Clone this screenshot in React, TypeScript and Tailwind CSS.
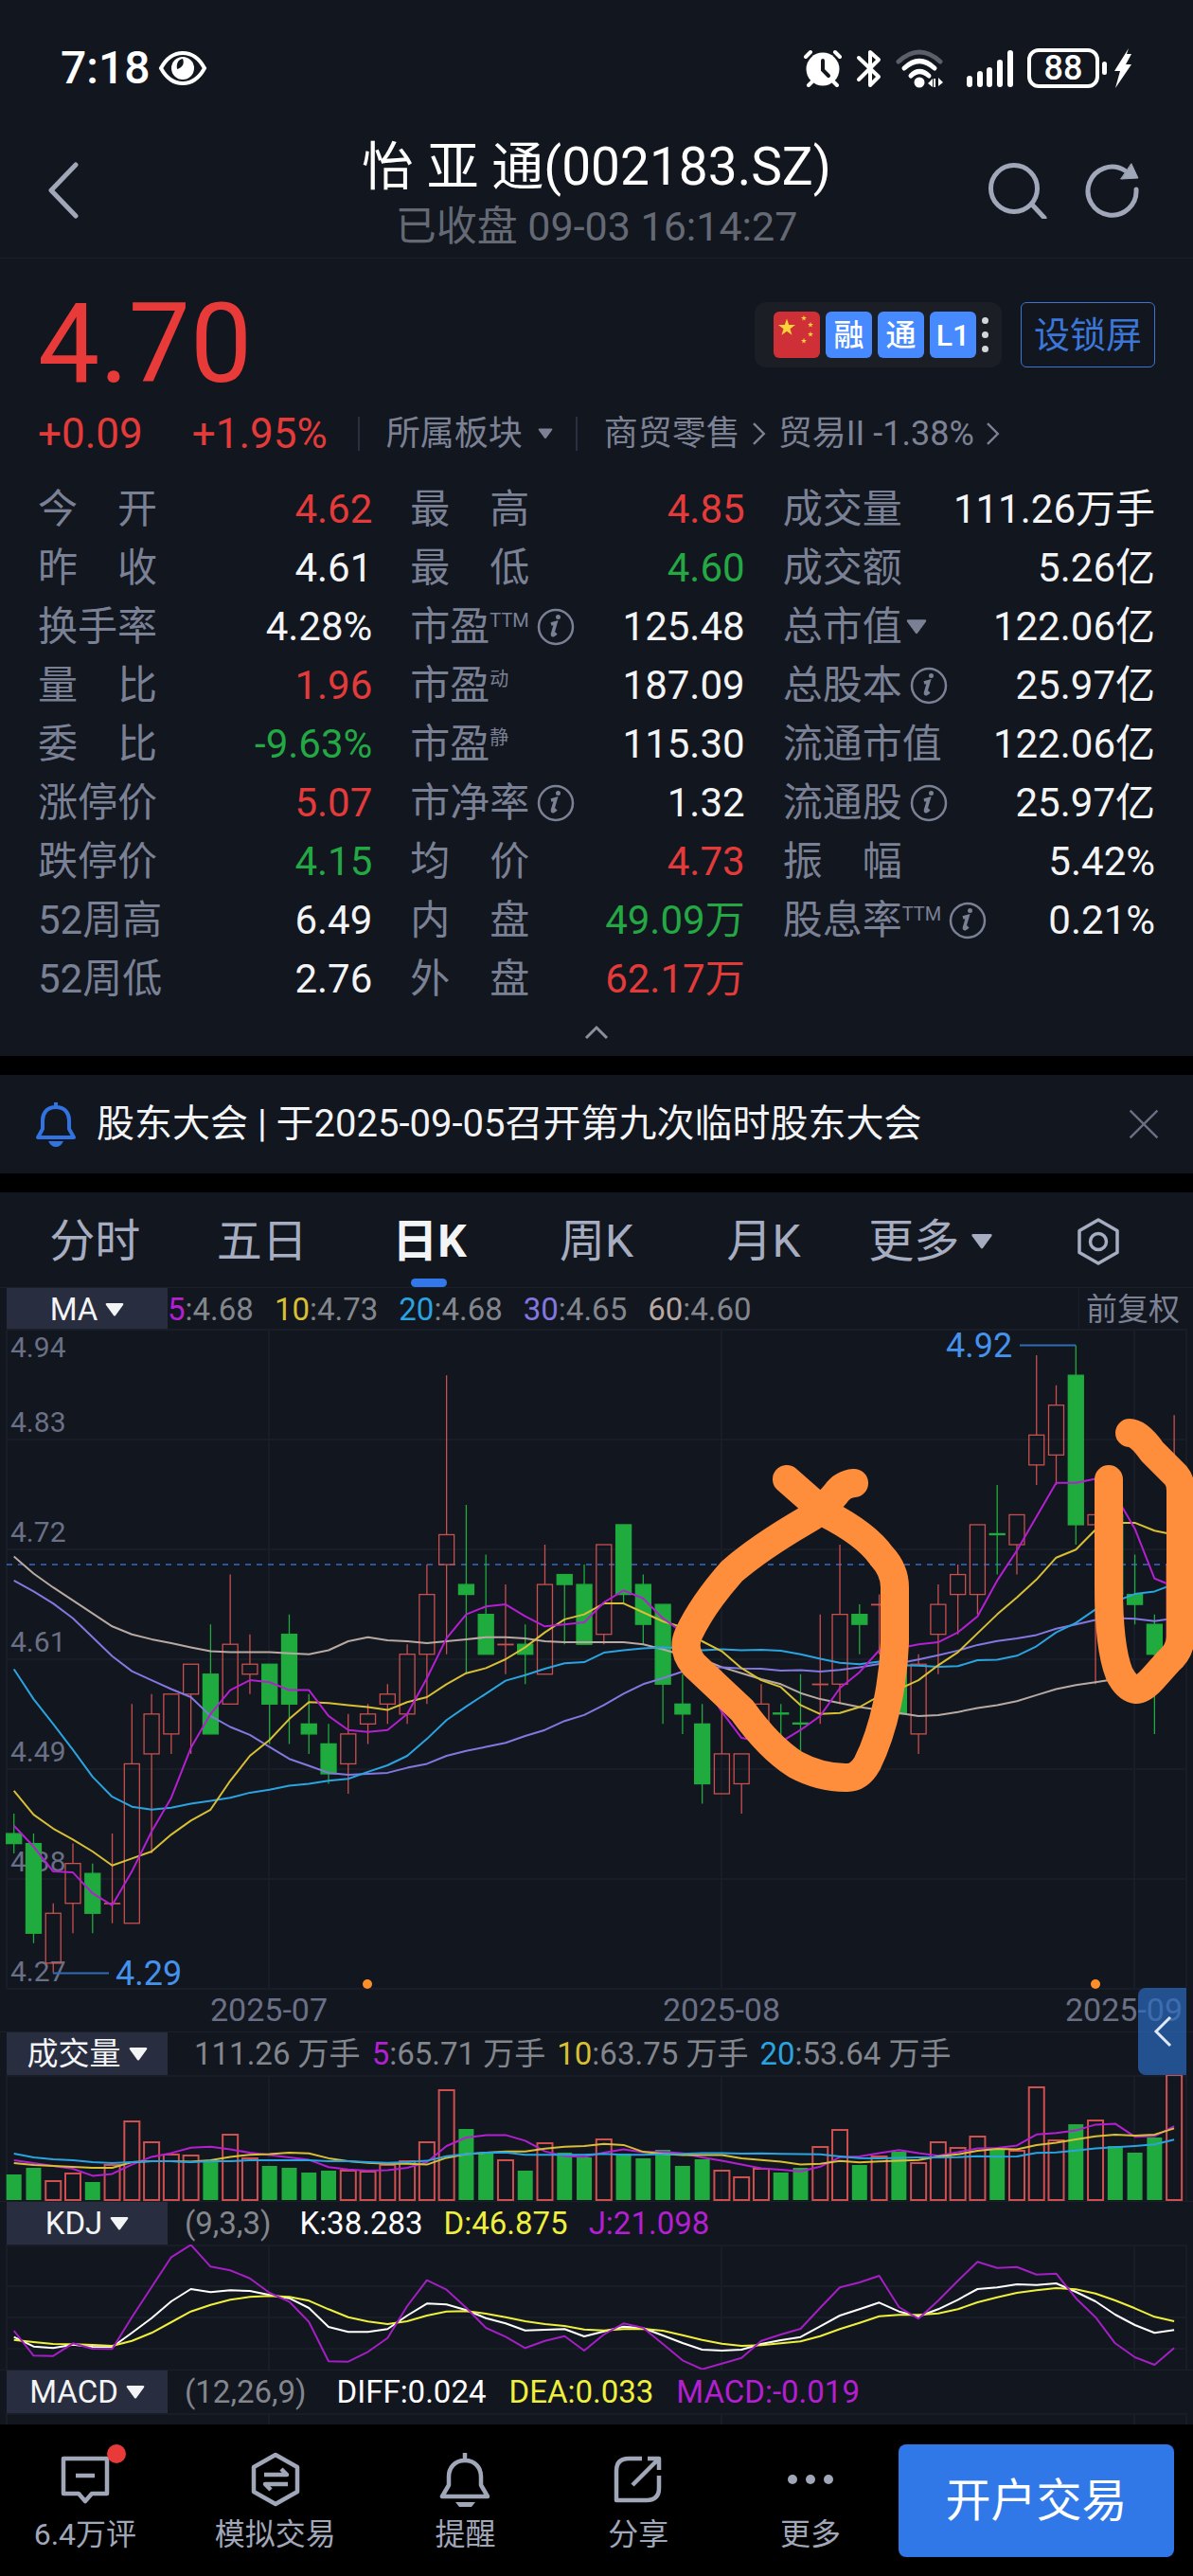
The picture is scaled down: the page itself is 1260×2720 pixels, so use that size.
import { useState } from "react";
import type { ReactNode } from "react";
import clsx from "clsx";

type Tone = "up" | "down" | "flat";

interface Stat {
  label: string;
  sup?: string;
  info?: boolean;
  caret?: boolean;
  value: string;
  tone?: Tone;
}

// open, close, high, low
type Candle = [number, number, number, number];

const STEP = 20.77;
const FIRST_X = 14.7;
const GRID = "#191d27";
const RED = "#c9504f";
const GREEN = "#1fab3d";
const PURPLE = "#b31fd1";
const YELLOW = "#d8bf35";
const CYAN = "#2aa4e0";
const VIOLET = "#8377e0";
const SAND = "#b8a9a2";
const MONTH_X = [284, 762, 1198];

const TONES: Record<Tone, string> = {
  up: "text-[#e33b3a]",
  down: "text-[#24a844]",
  flat: "text-[#f3f4f6]",
};

const stats: Stat[][] = [
  [
    { label: "今\u3000开", value: "4.62", tone: "up" },
    { label: "昨\u3000收", value: "4.61" },
    { label: "换手率", value: "4.28%" },
    { label: "量\u3000比", value: "1.96", tone: "up" },
    { label: "委\u3000比", value: "-9.63%", tone: "down" },
    { label: "涨停价", value: "5.07", tone: "up" },
    { label: "跌停价", value: "4.15", tone: "down" },
    { label: "52周高", value: "6.49" },
    { label: "52周低", value: "2.76" },
  ],
  [
    { label: "最\u3000高", value: "4.85", tone: "up" },
    { label: "最\u3000低", value: "4.60", tone: "down" },
    { label: "市盈", sup: "TTM", info: true, value: "125.48" },
    { label: "市盈", sup: "动", value: "187.09" },
    { label: "市盈", sup: "静", value: "115.30" },
    { label: "市净率", info: true, value: "1.32" },
    { label: "均\u3000价", value: "4.73", tone: "up" },
    { label: "内\u3000盘", value: "49.09万", tone: "down" },
    { label: "外\u3000盘", value: "62.17万", tone: "up" },
  ],
  [
    { label: "成交量", value: "111.26万手" },
    { label: "成交额", value: "5.26亿" },
    { label: "总市值", caret: true, value: "122.06亿" },
    { label: "总股本", info: true, value: "25.97亿" },
    { label: "流通市值", value: "122.06亿" },
    { label: "流通股", info: true, value: "25.97亿" },
    { label: "振\u3000幅", value: "5.42%" },
    { label: "股息率", sup: "TTM", info: true, value: "0.21%" },
  ],
];

const candles: Candle[] = [
  [4.43, 4.42, 4.45, 4.41], [4.42, 4.33, 4.43, 4.32], [4.3, 4.35, 4.36, 4.29], [4.36, 4.4, 4.42, 4.33],
  [4.39, 4.35, 4.4, 4.33], [4.36, 4.36, 4.43, 4.34], [4.34, 4.5, 4.56, 4.34], [4.51, 4.55, 4.57, 4.41],
  [4.53, 4.57, 4.57, 4.51], [4.57, 4.6, 4.6, 4.51], [4.59, 4.53, 4.64, 4.53], [4.56, 4.62, 4.69, 4.56],
  [4.59, 4.6, 4.63, 4.57], [4.6, 4.56, 4.6, 4.52], [4.63, 4.56, 4.65, 4.52], [4.54, 4.53, 4.57, 4.51],
  [4.52, 4.49, 4.54, 4.48], [4.5, 4.53, 4.55, 4.47], [4.54, 4.55, 4.56, 4.52], [4.56, 4.57, 4.58, 4.54],
  [4.55, 4.61, 4.62, 4.54], [4.61, 4.67, 4.7, 4.56], [4.7, 4.73, 4.89, 4.61], [4.68, 4.67, 4.76, 4.59],
  [4.65, 4.61, 4.71, 4.61], [4.62, 4.62, 4.68, 4.59], [4.62, 4.61, 4.64, 4.58], [4.59, 4.68, 4.72, 4.59],
  [4.69, 4.68, 4.69, 4.62], [4.68, 4.62, 4.7, 4.62], [4.63, 4.72, 4.72, 4.62], [4.74, 4.67, 4.74, 4.66],
  [4.68, 4.64, 4.69, 4.62], [4.66, 4.58, 4.66, 4.54], [4.56, 4.55, 4.59, 4.53], [4.54, 4.48, 4.56, 4.46],
  [4.47, 4.51, 4.56, 4.47], [4.48, 4.51, 4.51, 4.45], [4.54, 4.56, 4.58, 4.51], [4.551, 4.55, 4.56, 4.52],
  [4.541, 4.54, 4.59, 4.51], [4.58, 4.58, 4.65, 4.54], [4.58, 4.65, 4.72, 4.56], [4.65, 4.64, 4.66, 4.61],
  [4.66, 4.66, 4.67, 4.61], [4.64, 4.55, 4.66, 4.55], [4.53, 4.6, 4.61, 4.51], [4.63, 4.66, 4.68, 4.59],
  [4.67, 4.69, 4.7, 4.63], [4.67, 4.74, 4.74, 4.65], [4.731, 4.73, 4.78, 4.69], [4.72, 4.75, 4.75, 4.69],
  [4.8, 4.83, 4.91, 4.78], [4.81, 4.86, 4.88, 4.78], [4.89, 4.74, 4.92, 4.72], [4.74, 4.75, 4.78, 4.58],
  [4.75, 4.67, 4.76, 4.66], [4.67, 4.66, 4.71, 4.64], [4.64, 4.61, 4.65, 4.53], [4.62, 4.7, 4.85, 4.6],
];

const volumes = [
  27, 34, 20, 28, 19, 37, 83, 61, 48, 47, 42, 69, 44, 36, 34, 29, 31, 31, 30, 37,
  41, 61, 116, 75, 49, 42, 31, 60, 50, 45, 64, 49, 44, 53, 36, 43, 31, 24, 33, 29,
  34, 56, 74, 37, 46, 51, 39, 61, 55, 67, 53, 52, 119, 63, 80, 84, 57, 50, 66, 132,
];

// averages of the days whose window starts before the first candle
const priceSeed = {
  5: [4.438, 4.417, 4.392, 4.391],
  10: [4.473, 4.449, 4.435, 4.424, 4.412, 4.398, 4.405, 4.412, 4.429],
  20: [
    4.595, 4.565, 4.54, 4.514, 4.487, 4.467, 4.457, 4.454, 4.456, 4.46,
    4.463, 4.466, 4.471, 4.474, 4.478, 4.48, 4.483, 4.485, 4.492,
  ],
  30: [
    4.684, 4.673, 4.661, 4.646, 4.627, 4.608, 4.593, 4.584, 4.575, 4.567,
    4.548, 4.537, 4.529, 4.517, 4.505, 4.498, 4.491, 4.489, 4.49, 4.491,
    4.496, 4.5, 4.508, 4.513, 4.517, 4.521, 4.528, 4.534, 4.543,
  ],
};

const ma60 = [
  4.708, 4.691, 4.677, 4.664, 4.651, 4.638, 4.63, 4.625, 4.621, 4.617,
  4.613, 4.612, 4.612, 4.612, 4.611, 4.61, 4.614, 4.623, 4.627, 4.624,
  4.623, 4.621, 4.623, 4.625, 4.627, 4.627, 4.626, 4.623, 4.622, 4.622,
  4.622, 4.622, 4.62, 4.615, 4.609, 4.605, 4.597, 4.591, 4.585, 4.58,
  4.571, 4.565, 4.561, 4.557, 4.554, 4.551, 4.548, 4.549, 4.552, 4.556,
  4.559, 4.563, 4.569, 4.575, 4.579, 4.582, 4.585, 4.587, 4.592, 4.6,
];

const volumeSeed = {
  5: [42, 39, 36, 33],
  10: [39, 37, 36, 35, 34, 34, 40, 41, 41],
  20: [49, 45, 43, 42, 40, 39, 40, 41, 41, 40, 41, 41, 42, 42, 42, 42, 41, 41, 40],
};

const kdj = {
  k: [
    1133, 1163, 1168, 1157, 1164, 1165, 1120, 1073, 1020, 981, 991, 985, 987, 1000, 1010,
    1041, 1101, 1117, 1117, 1108, 1065, 1027, 1030, 1048, 1073, 1090, 1112, 1110, 1108, 1131,
    1115, 1100, 1105, 1128, 1152, 1173, 1176, 1173, 1155, 1143, 1133, 1099, 1065, 1045, 1024,
    1052, 1068, 1045, 1015, 981, 976, 966, 968, 963, 990, 1020, 1062, 1095, 1120, 1111,
  ],
  d: [
    1142, 1149, 1155, 1156, 1158, 1161, 1145, 1120, 1086, 1052, 1031, 1015, 1006, 1003, 1006,
    1018, 1045, 1070, 1084, 1092, 1083, 1065, 1052, 1051, 1059, 1070, 1083, 1092, 1098, 1109,
    1112, 1108, 1107, 1113, 1127, 1142, 1154, 1161, 1159, 1153, 1147, 1130, 1108, 1088, 1067,
    1063, 1063, 1058, 1045, 1023, 1007, 993, 985, 978, 982, 995, 1017, 1042, 1069, 1083,
  ],
  j: [
    1113, 1192, 1193, 1153, 1170, 1171, 1070, 975, 880, 841, 910, 922, 947, 993, 1021,
    1085, 1210, 1211, 1180, 1136, 1035, 953, 983, 1040, 1104, 1132, 1168, 1145, 1130, 1176,
    1125, 1090, 1104, 1155, 1207, 1235, 1217, 1199, 1145, 1125, 1107, 1040, 976, 960, 939,
    1038, 1075, 1018, 955, 895, 914, 911, 935, 932, 1010, 1070, 1153, 1197, 1221, 1168,
  ],
};

const xAt = (i: number) => FIRST_X + i * STEP;
const priceY = (p: number) => 16.6 + (4.92 - p) * 1052;
const volumeY = (v: number) => 132 - v;
const kdjY = (v: number) => v / 3 - 280;

function sma(values: number[], n: number, seed: number[]) {
  return values.map((_, i) =>
    i < n - 1 ? seed[i] : values.slice(i - n + 1, i + 1).reduce((a, b) => a + b, 0) / n
  );
}

function Line({ values, y, color, width = 2 }: { values: number[]; y: (v: number) => number; color: string; width?: number }) {
  const points = values.map((v, i) => `${xAt(i).toFixed(1)},${y(v).toFixed(1)}`).join(" ");
  return <polyline points={points} fill="none" stroke={color} strokeWidth={width} strokeLinejoin="round" />;
}

function Caret({ className }: { className?: string }) {
  return (
    <svg viewBox="0 0 20 14" fill="currentColor" className={clsx("shrink-0", className)} aria-hidden="true">
      <path d="M2 0h16q2 0 1 2l-8 11q-1 1-2 0L1 2Q0 0 2 0z" />
    </svg>
  );
}

function Chevron({ d, className, stroke = 2 }: { d: string; className: string; stroke?: number }) {
  return (
    <svg viewBox="0 0 20 20" fill="none" stroke="currentColor" strokeWidth={stroke} className={className} aria-hidden="true">
      <path d={d} />
    </svg>
  );
}

function StatusBar() {
  return (
    <div className="flex h-36 items-center justify-between px-16 text-white">
      <div className="flex items-center gap-2">
        <span className="text-5xl leading-none font-medium">7:18</span>
        <svg viewBox="0 0 52 38" className="h-[38px] w-[52px]" aria-hidden="true">
          <path d="M3 19C9 8 17 3 26 3s17 5 23 16c-6 11-14 16-23 16S9 30 3 19z" fill="none" stroke="currentColor" strokeWidth="4" />
          <circle cx="26" cy="19" r="12" fill="currentColor" />
          <path d="M26 9c2 5 0 9-6 11-1-6 1-10 6-11z" fill="#12161f" />
        </svg>
      </div>
      <div className="flex items-center gap-[14px]">
        <svg viewBox="0 0 42 40" className="h-10 w-[42px]" stroke="currentColor" strokeLinecap="round" aria-hidden="true">
          <circle cx="21" cy="21" r="17.5" fill="currentColor" stroke="none" />
          <path d="M3 8l5-5M34 3l5 5M6 38l4-4M36 38l-4-4" strokeWidth="4" fill="none" />
          <path d="M21 12v10l6 6" stroke="#12161f" strokeWidth="4" fill="none" />
        </svg>
        <svg viewBox="0 0 27 41" className="h-[41px] w-[27px]" fill="none" stroke="currentColor" strokeWidth="4" strokeLinecap="round" strokeLinejoin="round" aria-hidden="true">
          <path d="M3 32l21-21-9-8v35l9-9L3 9" />
        </svg>
        <svg viewBox="0 0 52 44" className="h-11 w-[52px]" fill="none" stroke="currentColor" strokeWidth="5" strokeLinecap="round" aria-hidden="true">
          <path d="M4 15Q26-5 48 15" stroke="#5b5f69" />
          <path d="M10 22q16-15 32 0M17 30q9-9 19 0" />
          <circle cx="26" cy="37" r="5.5" fill="currentColor" stroke="none" />
          <path d="M35 38l5-5v9zM51 37l-5-5v9zM41 33h2v9h-2z" fill="currentColor" stroke="none" />
        </svg>
        <svg viewBox="0 0 52 44" className="ml-2 h-11 w-[52px]" stroke="currentColor" strokeWidth="6" strokeLinecap="round" aria-hidden="true">
          <path d="M5 33v6M16 28v11M26 24v15M37 16v23M48 6v33" />
        </svg>
        <div className="flex items-center gap-[3px]">
          <span className="flex h-[42px] w-[76px] items-center justify-center rounded-xl border-4 border-white text-4xl leading-none font-medium">88</span>
          <span className="h-[14px] w-[5px] rounded-sm bg-white" />
          <svg viewBox="0 0 20 42" className="ml-1 h-[42px] w-5" fill="currentColor" aria-hidden="true">
            <path d="M16 0L1 24h6L2 42l17-25h-6L19 6h-5z" />
          </svg>
        </div>
      </div>
    </div>
  );
}

function Header() {
  return (
    <header className="grid grid-cols-[1fr_auto_1fr] items-center border-b border-[#1a1f29] pb-0.5">
      <div className="flex pb-3 pl-12 text-[#a0a7b9]">
        <button aria-label="返回">
          <svg viewBox="0 0 36 60" className="h-[60px] w-9" fill="none" stroke="currentColor" strokeWidth="5" strokeLinecap="round" strokeLinejoin="round">
            <path d="M32 3L6 30l26 27" />
          </svg>
        </button>
      </div>
      <div className="text-center">
        <h1 className="text-[55px] leading-16 whitespace-nowrap text-white">怡 亚 通(002183.SZ)</h1>
        <p className="text-[43px] leading-[62px] text-[#646974]">已收盘 09-03 16:14:27</p>
      </div>
      <div className="flex justify-end gap-10 pr-14 pb-3 text-[#a0a7b9]">
        <button aria-label="搜索">
          <svg viewBox="0 0 64 60" className="h-[60px] w-16" fill="none" stroke="currentColor" strokeWidth="5" strokeLinecap="round">
            <circle cx="29" cy="28" r="24.5" />
            <path d="M48 45l13 14" />
          </svg>
        </button>
        <button aria-label="刷新">
          <svg viewBox="0 0 58 60" className="h-[60px] w-[58px]" fill="none" stroke="currentColor" strokeWidth="5" strokeLinecap="round">
            <path d="M54 29A25.500 25.500 0 1 1 42 9" />
            <path d="M49 2l7 15-18 1z" fill="currentColor" strokeWidth="1" />
          </svg>
        </button>
      </div>
    </header>
  );
}

function Badge({ children }: { children: ReactNode }) {
  return (
    <span className="flex size-[49px] items-center justify-center rounded-md bg-[#478aff] text-[32px] leading-none font-medium text-white">
      {children}
    </span>
  );
}

const STAR = "M0-9.500L2.200-3h6.800L3.500 1.200l2 6.500L0 3.700l-5.500 4 2-6.500L-9-3h6.800z";

function Quote() {
  return (
    <div className="px-10 pt-8">
      <div className="flex items-start justify-between">
        <div className="text-[116px] leading-none text-[#e83a38]">4.70</div>
        <div className="mt-3.5 flex gap-5">
          <div className="flex items-center gap-1.5 rounded-xl bg-[#1b1e25] py-2.5 pr-3.5 pl-5">
            <svg viewBox="0 0 49 49" className="size-[49px] rounded-md" aria-label="中国">
              <path d="M0 0h49v49H0z" fill="#cf3037" />
              <g fill="#f8d33a">
                <path d={STAR} transform="translate(14 17)" />
                <path d={STAR} transform="translate(32 7) scale(.33)" />
                <path d={STAR} transform="translate(39 14) scale(.33)" />
                <path d={STAR} transform="translate(39 24) scale(.33)" />
                <path d={STAR} transform="translate(32 31) scale(.33)" />
              </g>
            </svg>
            <Badge>融</Badge>
            <Badge>通</Badge>
            <Badge>L1</Badge>
            <span className="flex flex-col gap-2">
              <i className="size-[7px] rounded-full bg-[#d5d6d8]" />
              <i className="size-[7px] rounded-full bg-[#d5d6d8]" />
              <i className="size-[7px] rounded-full bg-[#d5d6d8]" />
            </span>
          </div>
          <button className="rounded-md border border-[#3c74cf] px-[13px] text-[38px] leading-[66px] text-[#3c77d8]">设锁屏</button>
        </div>
      </div>

      <div className="mt-3 flex h-[50px] items-center text-4xl text-[#7c8294]">
        <span className="text-[44px] text-[#e33b3a]">+0.09</span>
        <span className="ml-[52px] text-[44px] text-[#e33b3a]">+1.95%</span>
        <span className="ml-8 h-9 w-0.5 bg-[#2a3040]" />
        <button className="ml-7 flex items-center gap-4">
          所属板块
          <Caret className="h-3 w-4" />
        </button>
        <span className="ml-6 h-9 w-0.5 bg-[#2a3040]" />
        <a href="#retail" className="ml-7 flex items-center gap-2">
          商贸零售
          <Chevron d="M5 1l9 9-9 9" className="h-7 w-6" />
        </a>
        <a href="#trade" className="ml-2 flex items-center gap-2">
          贸易II -1.38%
          <Chevron d="M5 1l9 9-9 9" className="h-7 w-6" />
        </a>
      </div>

      <div className="mt-6 grid grid-cols-[353fr_353fr_393fr] gap-x-10">
        {stats.map((column, i) => (
          <dl key={i}>
            {column.map((s) => (
              <StatRow key={s.label + (s.sup ?? "")} stat={s} />
            ))}
          </dl>
        ))}
      </div>

      <button aria-label="收起" className="mx-auto flex h-[50px] w-20 items-center justify-center text-[#8b8f9b]">
        <svg viewBox="0 0 26 16" className="h-4 w-[26px]" fill="none" stroke="currentColor" strokeWidth="3">
          <path d="M2 14L13 3l11 11" />
        </svg>
      </button>
    </div>
  );
}

function StatRow({ stat }: { stat: Stat }) {
  return (
    <div className="flex justify-between text-[42px] leading-[62px] whitespace-nowrap">
      <dt className="flex items-center text-[#7a8195]">
        {stat.label}
        {stat.sup && <span className="mb-3.5 text-xl">{stat.sup}</span>}
        {stat.caret && <Caret className="ml-1 h-4 w-[22px]" />}
        {stat.info && (
          <svg viewBox="0 0 40 40" className="ml-2 size-10" fill="none" stroke="currentColor" strokeWidth="2.500" aria-hidden="true">
            <circle cx="20" cy="20" r="18" />
            <path d="M15 17l5-1.500-3.500 12q-.5 3 4-1" strokeWidth="3.500" />
            <circle cx="22.500" cy="9.500" r="2.500" fill="currentColor" stroke="none" />
          </svg>
        )}
      </dt>
      <dd className={TONES[stat.tone ?? "flat"]}>{stat.value}</dd>
    </div>
  );
}

function Notice() {
  return (
    <section className="flex items-center bg-[#12161f] px-9 py-5">
      <svg viewBox="0 0 44 48" className="h-12 w-11 text-[#3173e0]" fill="none" stroke="currentColor" strokeWidth="4" strokeLinejoin="round" aria-hidden="true">
        <path d="M23 6C13 6 9 13 9 20v9L4 38h38l-5-9v-9C37 13 33 6 23 6zM23 1v5" />
        <path d="M15 42h16q-3 6-8 6t-8-6z" fill="currentColor" stroke="none" />
      </svg>
      <p className="ml-[22px] flex-1 text-[40px] leading-16 text-[#f3f4f6]">股东大会 | 于2025-09-05召开第九次临时股东大会</p>
      <button aria-label="关闭" className="text-[#6a7082]">
        <Chevron d="M1 1l18 18M19 1L1 19" className="size-8" stroke={1.5} />
      </button>
    </section>
  );
}

const tabs = ["分时", "五日", "日K", "周K", "月K"];

function PeriodTabs() {
  const [active, setActive] = useState("日K");
  return (
    <nav className="grid h-[100px] grid-cols-7 px-3 text-5xl text-[#a6adc0]">
      {tabs.map((tab) => (
        <button
          key={tab}
          onClick={() => setActive(tab)}
          className={clsx("relative pt-1", active === tab && "font-bold text-[#f3f4f6]")}
        >
          {tab}
          {active === tab && <span className="absolute inset-x-0 bottom-0 mx-auto h-[9px] w-[38px] rounded-full bg-[#3378ea]" />}
        </button>
      ))}
      <button className="flex items-center justify-center gap-3 pt-1">
        更多
        <Caret className="h-4 w-6" />
      </button>
      <button aria-label="设置" className="flex items-center justify-center pt-1">
        <svg viewBox="0 0 46 50" className="h-[50px] w-[46px]" fill="none" stroke="currentColor" strokeWidth="3.500" strokeLinejoin="round">
          <path d="M23 2l20 11.500v23L23 48 3 36.500v-23z" />
          <circle cx="23" cy="25" r="8.500" />
        </svg>
      </button>
    </nav>
  );
}

function IndicatorRow({ name, children }: { name: string; children: ReactNode }) {
  return (
    <div className="flex h-[46px] items-center border-t border-[#1a1f29] px-[7px] text-[33px] leading-none whitespace-nowrap text-[#83878d]">
      <button className="flex h-full w-[170px] items-center justify-center gap-2 bg-[#282d3f] text-[#f3f4f6]">
        {name}
        <Caret className="h-[14px] w-5" />
      </button>
      {children}
    </div>
  );
}

function MaValue({ n, color, value }: { n: number; color: string; value: string }) {
  return (
    <span>
      <span className={color}>{n}</span>:{value}
    </span>
  );
}

function VerticalGrid({ height }: { height: number }) {
  return (
    <path d={[7, ...MONTH_X, 1253].map((x) => `M${x} 0V${height}`).join("")} stroke={GRID} strokeWidth="2" fill="none" />
  );
}

function CandleChart() {
  const closes = candles.map((c) => c[1]);
  const labels = ["4.94", "4.83", "4.72", "4.61", "4.49", "4.38", "4.27"];
  return (
    <svg viewBox="0 0 1260 741" className="block h-auto w-full overflow-visible">
      <VerticalGrid height={695} />
      {labels.map((label, i) => (
        <path key={label} d={`M7 ${i * 116}H1253`} stroke={GRID} strokeWidth="2" />
      ))}
      <path d="M7 248H1253" stroke="#2b569f" strokeWidth="2" strokeDasharray="6 6" />
      <g fill="#6a7085" fontSize="30">
        {labels.map((label, i) => (
          <text key={label} x="11" y={i === 0 ? 29 : i * 116 - 8}>
            {label}
          </text>
        ))}
      </g>

      {candles.map(([open, close, high, low], i) => {
        const x = xAt(i);
        const up = close >= open;
        const top = priceY(Math.max(open, close));
        const bottom = priceY(Math.min(open, close));
        return (
          <g key={i} stroke={up ? RED : GREEN} strokeWidth="1.300" fill={up ? "none" : GREEN}>
            <path d={`M${x} ${priceY(high)}V${top}M${x} ${bottom}V${priceY(low)}`} />
            <rect x={x - 8} y={top} width="16" height={Math.max(bottom - top, 0.5)} />
          </g>
        );
      })}

      <Line values={ma60} y={priceY} color={SAND} />
      <Line values={sma(closes, 30, priceSeed[30])} y={priceY} color={VIOLET} />
      <Line values={sma(closes, 20, priceSeed[20])} y={priceY} color={CYAN} />
      <Line values={sma(closes, 10, priceSeed[10])} y={priceY} color={YELLOW} />
      <Line values={sma(closes, 5, priceSeed[5])} y={priceY} color={PURPLE} />

      <path d="M56 679.500H115M1077 16.500H1136" stroke="#2f6cb5" strokeWidth="2" />
      <g fill="#4592ee" fontSize="36">
        <text x="122" y="692">4.29</text>
        <text x="999" y="29">4.92</text>
      </g>
      <circle cx="388" cy="691" r="5" fill="#ff8f2a" />
      <circle cx="1157" cy="691" r="5" fill="#ff8f2a" />
      <g fill="#6a7085" fontSize="34" textAnchor="middle">
        <text x="284" y="730">2025-07</text>
        <text x="762" y="730">2025-08</text>
        <text x="1187" y="730">2025-09</text>
      </g>

      {/* hand-drawn marks */}
      <g fill="none" stroke="#ff8e3c" strokeWidth="30" strokeLinecap="round" strokeLinejoin="round">
        <path d="M831 158L872 194Q915 216 931 239Q945 254 945 272V330Q944 362 937 395Q929 432 916 458Q907 474 893 473Q866 473 840 459Q812 441 784 402L733 354Q720 338 727 322Q742 290 773 255Q802 230 850 202Q866 194 883 173Q890 163 902 162" />
        <path d="M1193 109Q1203 109 1217 129L1242 154Q1247 160 1247 170V325Q1246 340 1234 350L1217 369Q1207 380 1200 380Q1190 379 1182 363Q1171 335 1171 270V158" />
      </g>
    </svg>
  );
}

function VolumeChart() {
  return (
    <svg viewBox="0 0 1260 133" className="block h-auto w-full">
      <VerticalGrid height={133} />
      <path d="M7 1H1253" stroke={GRID} strokeWidth="2" />
      {volumes.map((v, i) => {
        const up = candles[i][1] >= candles[i][0];
        return (
          <rect
            key={i}
            x={xAt(i) - 8}
            y={volumeY(v)}
            width="16"
            height={v}
            fill={up ? "none" : GREEN}
            stroke={up ? "#d0504f" : "none"}
            strokeWidth="2"
          />
        );
      })}
      <Line values={sma(volumes, 5, volumeSeed[5])} y={volumeY} color={PURPLE} />
      <Line values={sma(volumes, 10, volumeSeed[10])} y={volumeY} color={YELLOW} />
      <Line values={sma(volumes, 20, volumeSeed[20])} y={volumeY} color={CYAN} />
    </svg>
  );
}

function KdjChart() {
  return (
    <svg viewBox="0 0 1260 132" className="block h-auto w-full">
      <VerticalGrid height={132} />
      <path d="M7 1H1253M7 44H1253M7 77H1253M7 110H1253" stroke={GRID} strokeWidth="2" />
      <Line values={kdj.k} y={kdjY} color="#ffffff" />
      <Line values={kdj.d} y={kdjY} color="#eff03c" />
      <Line values={kdj.j} y={kdjY} color="#a31fc4" />
    </svg>
  );
}

function Charts() {
  return (
    <section className="bg-[#12161f]">
      <PeriodTabs />
      <div className="relative -mb-px">
        <IndicatorRow name="MA">
          <div className="flex flex-1 gap-[22px]">
            <MaValue n={5} color="text-[#b31fd1]" value="4.68" />
            <MaValue n={10} color="text-[#d8bf35]" value="4.73" />
            <MaValue n={20} color="text-[#2aa4e0]" value="4.68" />
            <MaValue n={30} color="text-[#8377e0]" value="4.65" />
            <MaValue n={60} color="text-[#b8a9a2]" value="4.60" />
          </div>
          <button className="h-full border-l border-[#1a1f29] px-[7px] text-[#7c8294]">前复权</button>
        </IndicatorRow>
      </div>
      <div className="relative">
        <CandleChart />
        <IndicatorRow name="成交量">
          <div className="flex gap-3 pl-7">
            <span>111.26 万手</span>
            <MaValue n={5} color="text-[#b31fd1]" value="65.71 万手" />
            <MaValue n={10} color="text-[#d8bf35]" value="63.75 万手" />
            <MaValue n={20} color="text-[#2aa4e0]" value="53.64 万手" />
          </div>
        </IndicatorRow>
        <button
          aria-label="展开侧栏"
          className="absolute right-[7px] bottom-0 flex h-[92px] w-[51px] items-center justify-center rounded-l-lg bg-[#2b6bc0]/70 text-[#dfe8f5]"
        >
          <svg viewBox="0 0 20 34" className="h-[34px] w-5" fill="none" stroke="currentColor" strokeWidth="3">
            <path d="M18 2L3 17l15 15" />
          </svg>
        </button>
      </div>
      <VolumeChart />
      <IndicatorRow name="KDJ">
        <div className="flex gap-[22px] pl-[18px]">
          <span className="mr-2">(9,3,3)</span>
          <span className="text-white">K:38.283</span>
          <span className="text-[#eff03c]">D:46.875</span>
          <span className="text-[#b31fd1]">J:21.098</span>
        </div>
      </IndicatorRow>
      <KdjChart />
      <IndicatorRow name="MACD">
        <div className="flex gap-6 pl-[18px]">
          <span className="mr-2">(12,26,9)</span>
          <span className="text-white">DIFF:0.024</span>
          <span className="text-[#eff03c]">DEA:0.033</span>
          <span className="text-[#b31fd1]">MACD:-0.019</span>
        </div>
      </IndicatorRow>
      <svg viewBox="0 0 1260 12" className="block h-auto w-full">
        <VerticalGrid height={12} />
        <path d="M7 1H1253" stroke={GRID} strokeWidth="2" />
      </svg>
    </section>
  );
}

function NavItem({ label, dot, children }: { label: string; dot?: boolean; children: ReactNode }) {
  return (
    <button className="flex flex-col items-center gap-2 pt-7 text-[32px] leading-10 text-[#a0a7b9]">
      <span className="relative">
        <svg viewBox="0 0 60 60" className="size-15" fill="none" stroke="currentColor" strokeWidth="4.500" strokeLinejoin="round" aria-hidden="true">
          {children}
        </svg>
        {dot && <span className="absolute -top-[7px] -right-[13px] size-5 rounded-full bg-[#e83a38]" />}
      </span>
      {label}
    </button>
  );
}

function BottomBar() {
  return (
    <footer className="flex items-start bg-black pr-5">
      <nav className="mr-1 grid flex-1 grid-cols-[180fr_222fr_180fr_186fr_178fr]">
        <NavItem label="6.4万评" dot>
          <path d="M7 8h46v37H37l-7 8-7-8H7zM20 26h20" />
        </NavItem>
        <NavItem label="模拟交易">
          <path d="M30 4l23 13v26L30 56 7 43V17z" />
          <path d="M18 25h24l-6-6M43 35H19l6 6" />
        </NavItem>
        <NavItem label="提醒">
          <path d="M30 10c-11 0-17 8-17 17v9L6 48h48l-7-12v-9c0-9-6-17-17-17zM30 2v8" />
          <path d="M20 54h21l-4 5H24z" fill="currentColor" stroke="none" />
        </NavItem>
        <NavItem label="分享">
          <path d="M34 8H20Q7 8 7 21v31h32q13 0 13-13V26M40 8h12v12M51 9L24 36" />
        </NavItem>
        <NavItem label="更多">
          <g fill="currentColor" stroke="none">
            <circle cx="11" cy="30" r="5" />
            <circle cx="30" cy="30" r="5" />
            <circle cx="49" cy="30" r="5" />
          </g>
        </NavItem>
      </nav>
      <button className="mt-[21px] mb-5 w-[291px] rounded-lg bg-[#3077e8] text-5xl leading-[119px] text-white">开户交易</button>
    </footer>
  );
}

export default function App() {
  return (
    <main className="min-h-screen bg-black font-['Roboto','Noto_Sans_CJK_SC',sans-serif]">
      <div className="flex flex-col gap-5">
        <section className="bg-[#12161f]">
          <StatusBar />
          <Header />
          <Quote />
        </section>
        <Notice />
        <Charts />
      </div>
      <BottomBar />
    </main>
  );
}
